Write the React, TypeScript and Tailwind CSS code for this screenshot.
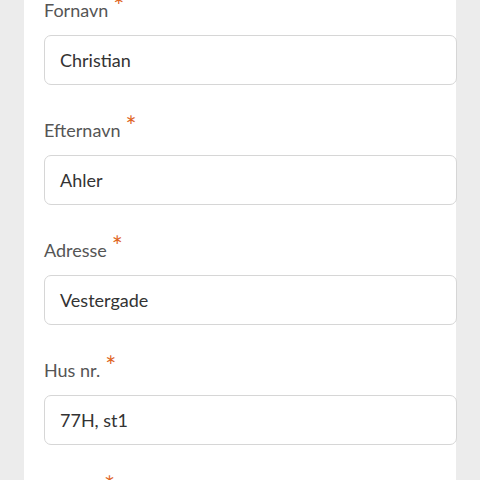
import React from "react";

const fields = [
  { label: "Fornavn", value: "Christian" },
  { label: "Efternavn", value: "Ahler" },
  { label: "Adresse", value: "Vestergade" },
  { label: "Hus nr.", value: "77H, st1" },
  { label: "Postnr.", value: "" },
];

export default function App() {
  return (
    <div className="w-[480px] h-[480px] overflow-hidden bg-[#ececec] flex" style={{ fontFamily: "Lato, 'Open Sans', sans-serif" }}>
      <div className="ml-[24px] w-[432px] bg-white pl-[20px] flex flex-col -mt-[2px]">
        {fields.map((f) => (
          <div key={f.label} className="flex flex-col">
            <div className="h-[24px] leading-[24px] text-[18px] text-[#555555] whitespace-nowrap">
              <span>{f.label}</span>
              <span className="inline-block align-top h-[24px] ml-[5px] relative -top-[4px] leading-[24px] text-[#e0651f] text-[26px]">*</span>
            </div>
            <div className="mt-[13px] h-[50px] mb-[33px] -mr-[1px] border border-[#d6d6d6] rounded-[7px] flex items-center pl-[15px] text-[18px] text-[#333333]">
              {f.value}
            </div>
          </div>
        ))}
      </div>
    </div>
  );
}
